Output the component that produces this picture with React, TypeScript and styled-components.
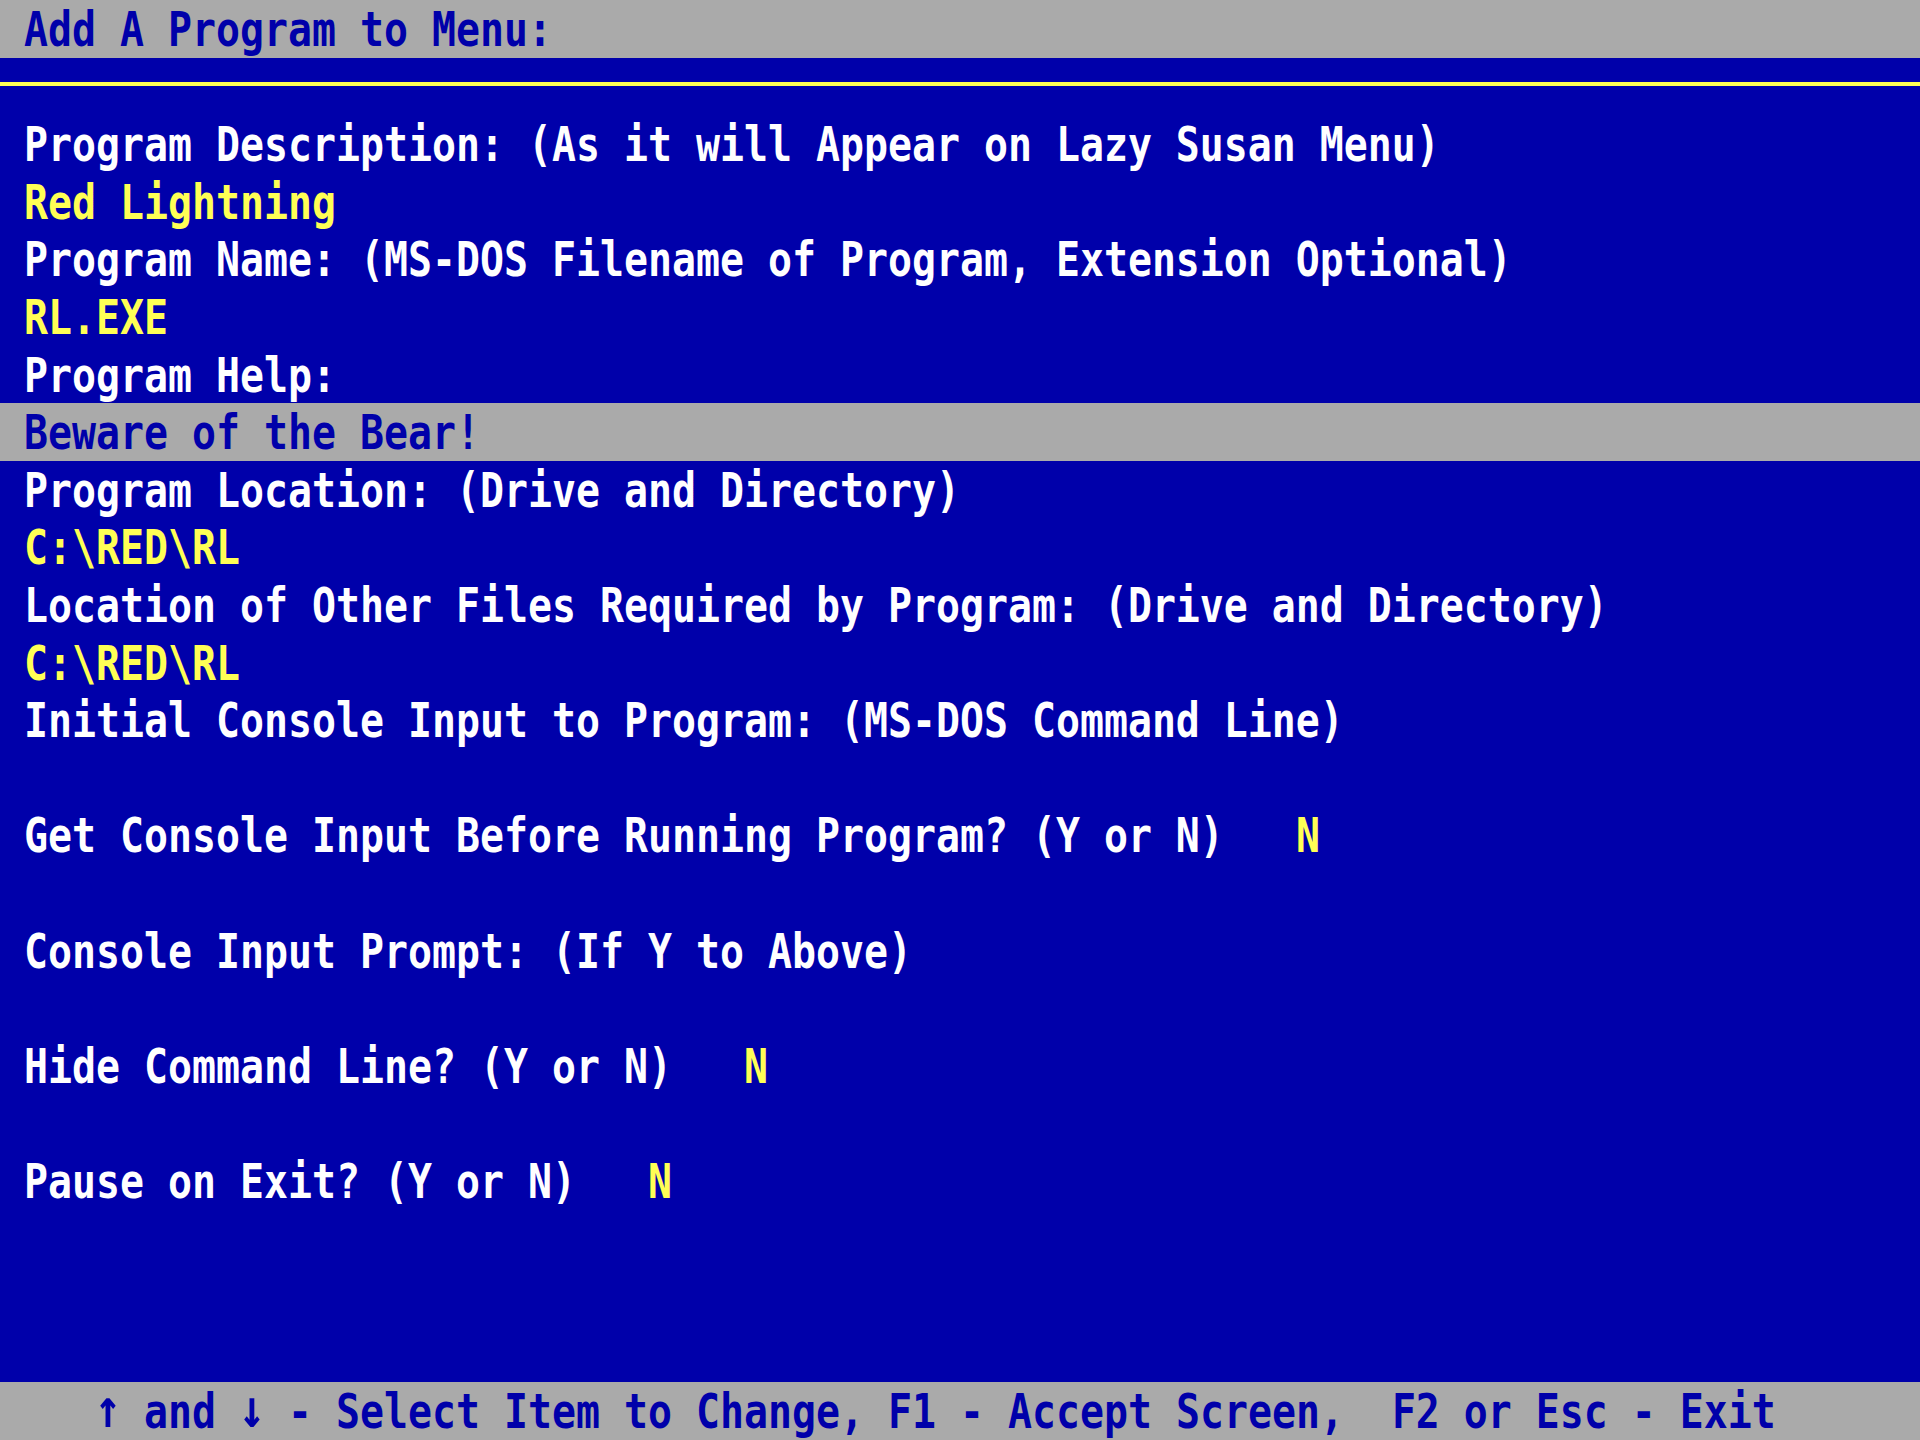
import styled, { createGlobalStyle } from "styled-components";

const BLUE = "#0000aa";
const GRAY = "#aaaaaa";
const WHITE = "#ffffff";
const YELLOW = "#ffff55";

const GlobalStyle = createGlobalStyle`
  html, body {
    margin: 0;
    padding: 0;
    background: ${BLUE};
  }
`;

const Screen = styled.div`
  width: 1920px;
  height: 1440px;
  background: ${BLUE};
  display: flex;
  flex-direction: column;
  overflow: hidden;
  font-family: "DejaVu Sans Mono", "Liberation Mono", monospace;
  font-weight: bold;
  font-size: 39.864px;
`;

const Row = styled.div<{ $bar?: boolean }>`
  height: 57.6px;
  line-height: 57.6px;
  flex: none;
  padding-left: 24px;
  white-space: pre;
  background: ${(p) => (p.$bar ? GRAY : "transparent")};
`;

const Text = styled.span<{ $tone?: "white" | "yellow" | "blue" }>`
  display: inline-block;
  transform: translateY(1px) scaleY(1.2);
  color: ${(p) =>
    p.$tone === "yellow" ? YELLOW : p.$tone === "blue" ? BLUE : WHITE};
`;

const Arrow = styled.span`
  display: inline-block;
  transform: translateY(-2px) scale(1.1, 1.12);
`;

const Divider = styled.div`
  height: 57.6px;
  flex: none;
  padding-top: 24.4px;
  box-sizing: border-box;
`;

const Rule = styled.div`
  height: 4px;
  background: ${YELLOW};
`;

const Spacer = styled.div`
  flex: 1;
`;

const Footer = styled(Row)`
  padding-left: 96px;
`;

type Line =
  | { kind: "label"; text: string; answer?: string }
  | { kind: "value"; text: string }
  | { kind: "selected"; text: string }
  | { kind: "blank" };

const lines: Line[] = [
  { kind: "label", text: "Program Description: (As it will Appear on Lazy Susan Menu)" },
  { kind: "value", text: "Red Lightning" },
  { kind: "label", text: "Program Name: (MS-DOS Filename of Program, Extension Optional)" },
  { kind: "value", text: "RL.EXE" },
  { kind: "label", text: "Program Help:" },
  { kind: "selected", text: "Beware of the Bear!" },
  { kind: "label", text: "Program Location: (Drive and Directory)" },
  { kind: "value", text: "C:\\RED\\RL" },
  { kind: "label", text: "Location of Other Files Required by Program: (Drive and Directory)" },
  { kind: "value", text: "C:\\RED\\RL" },
  { kind: "label", text: "Initial Console Input to Program: (MS-DOS Command Line)" },
  { kind: "blank" },
  { kind: "label", text: "Get Console Input Before Running Program? (Y or N)", answer: "N" },
  { kind: "blank" },
  { kind: "label", text: "Console Input Prompt: (If Y to Above)" },
  { kind: "blank" },
  { kind: "label", text: "Hide Command Line? (Y or N)", answer: "N" },
  { kind: "blank" },
  { kind: "label", text: "Pause on Exit? (Y or N)", answer: "N" },
];

function ScreenLine({ line }: { line: Line }) {
  switch (line.kind) {
    case "blank":
      return <Row />;
    case "value":
      return (
        <Row>
          <Text $tone="yellow">{line.text}</Text>
        </Row>
      );
    case "selected":
      return (
        <Row $bar>
          <Text $tone="blue">{line.text}</Text>
        </Row>
      );
    default:
      return (
        <Row>
          <Text>{line.answer ? line.text + "   " : line.text}</Text>
          {line.answer && <Text $tone="yellow">{line.answer}</Text>}
        </Row>
      );
  }
}

export default function App() {
  return (
    <>
      <GlobalStyle />
      <Screen>
        <Row $bar>
          <Text $tone="blue">Add A Program to Menu:</Text>
        </Row>
        <Divider>
          <Rule />
        </Divider>
        {lines.map((line, i) => (
          <ScreenLine key={i} line={line} />
        ))}
        <Spacer />
        <Footer $bar>
          <Text $tone="blue">
            <Arrow>↑</Arrow> and <Arrow>↓</Arrow> - Select Item to Change, F1 - Accept Screen,  F2 or Esc - Exit
          </Text>
        </Footer>
      </Screen>
    </>
  );
}
